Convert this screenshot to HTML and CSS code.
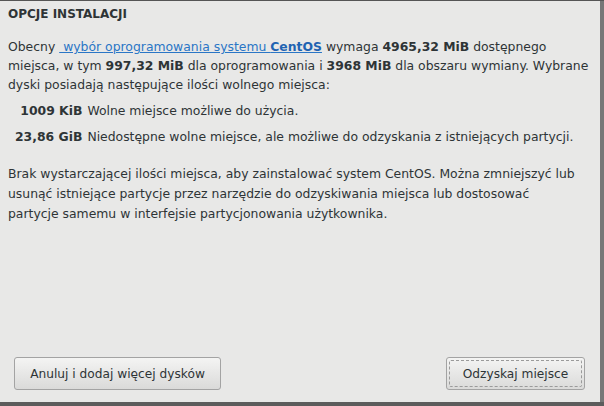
FILE: index.html
```html
<!DOCTYPE html>
<html lang="pl">
<head>
<meta charset="utf-8">
<link rel="stylesheet" href="styles.css">
</head>
<body>
<div class="screen">
  <div class="dialog">
    <h1 class="title">OPCJE INSTALACJI</h1>
    <p class="para">Obecny <a class="link" href="#">&nbsp;wybór oprogramowania systemu <b>CentOS</b></a> wymaga <b>4965,32 MiB</b> dostępnego miejsca, w tym <b>997,32 MiB</b> dla oprogramowania i <b>3968 MiB</b> dla obszaru wymiany. Wybrane dyski posiadają następujące ilości wolnego miejsca:</p>
    <div class="spaces">
      <div class="amount">1009 KiB</div><div class="desc">Wolne miejsce możliwe do użycia.</div>
      <div class="amount">23,86 GiB</div><div class="desc">Niedostępne wolne miejsce, ale możliwe do odzyskania z istniejących partycji.</div>
    </div>
    <p class="para second">Brak wystarczającej ilości miejsca, aby zainstalować system CentOS. Można zmniejszyć lub usunąć istniejące partycje przez narzędzie do odzyskiwania miejsca lub dostosować<br>partycje samemu w interfejsie partycjonowania użytkownika.</p>
    <div class="buttons">
      <button class="btn">Anuluj i dodaj więcej dysków</button>
      <button class="btn focused"><span class="ring">Odzyskaj miejsce</span></button>
    </div>
  </div>
  <div class="side"></div>
</div>
<div class="bottom"></div>
</body>
</html>
```

FILE: styles.css
```css
html, body {
  margin: 0;
  padding: 0;
  width: 604px;
  height: 406px;
  overflow: hidden;
  background: #6f6f6f;
  font-family: "DejaVu Sans", "Noto Sans", sans-serif;
  color: #2e3436;
}
.screen {
  display: flex;
  height: 402px;
  border-top: 1px solid #555;
  box-sizing: border-box;
}
.dialog {
  width: 600px;
  background: #e8e8e7;
  display: flex;
  flex-direction: column;
  padding: 0 8px;
  box-sizing: border-box;
  font-size: 12.4px;
}
.side {
  flex: 1;
  background: #777;
}
.bottom {
  height: 4px;
  background: #5c5c5c;
}
.title {
  margin: 5px 0 0;
  font-size: 12px;
  font-weight: bold;
  line-height: 16px;
}
.para {
  margin: 15px 0 0;
  line-height: 19px;
}
.link {
  color: #2a76c6;
  text-decoration: underline;
}
.link b { color: #1f63b2; }
.spaces {
  display: grid;
  grid-template-columns: max-content auto;
  column-gap: 5px;
  row-gap: 7px;
  margin-top: 7px;
  padding-left: 7px;
  line-height: 19px;
}
.amount {
  font-weight: bold;
  text-align: right;
  white-space: nowrap;
}
.second {
  margin-top: 18px;
  line-height: 20px;
}
.buttons {
  margin-top: auto;
  margin-bottom: 12px;
  display: flex;
  justify-content: space-between;
  padding: 0 7px 0 6px;
}
.btn {
  font-family: inherit;
  font-size: 12.2px;
  color: #2e3436;
  height: 33px;
  border: 1px solid #a3a3a3;
  border-radius: 3px;
  background: linear-gradient(#f4f4f3, #dadad9);
  padding: 0;
  width: 207px;
}
.focused {
  width: 139px;
  padding: 2px;
}
.ring {
  display: flex;
  align-items: center;
  justify-content: center;
  height: 100%;
  border: 1px dashed #9a9a9a;
  border-radius: 2px;
  box-sizing: border-box;
}
```
